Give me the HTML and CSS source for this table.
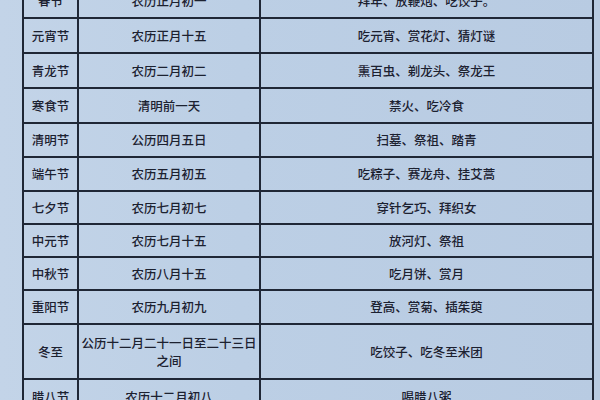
FILE: index.html
```html
<!DOCTYPE html>
<html lang="zh">
<head>
<meta charset="utf-8">
<link rel="stylesheet" href="styles.css">
</head>
<body>
<div class="sheet">
<table class="festivals">
<colgroup><col class="c1"><col class="c2"><col class="c3"></colgroup>
<tbody>
<tr class="r35"><td>春节</td><td>农历正月初一</td><td>拜年、放鞭炮、吃饺子。</td></tr>
<tr class="r35"><td>元宵节</td><td>农历正月十五</td><td>吃元宵、赏花灯、猜灯谜</td></tr>
<tr class="r35"><td>青龙节</td><td>农历二月初二</td><td>熏百虫、剃龙头、祭龙王</td></tr>
<tr class="r35"><td>寒食节</td><td>清明前一天</td><td>禁火、吃冷食</td></tr>
<tr class="r34"><td>清明节</td><td>公历四月五日</td><td>扫墓、祭祖、踏青</td></tr>
<tr class="r34"><td>端午节</td><td>农历五月初五</td><td>吃粽子、赛龙舟、挂艾蒿</td></tr>
<tr class="r33"><td>七夕节</td><td>农历七月初七</td><td>穿针乞巧、拜织女</td></tr>
<tr class="r33"><td>中元节</td><td>农历七月十五</td><td>放河灯、祭祖</td></tr>
<tr class="r33"><td>中秋节</td><td>农历八月十五</td><td>吃月饼、赏月</td></tr>
<tr class="r34"><td>重阳节</td><td>农历九月初九</td><td>登高、赏菊、插茱萸</td></tr>
<tr class="r55"><td>冬至</td><td class="nowrap">公历十二月二十一日至二十三日<br>之间</td><td>吃饺子、吃冬至米团</td></tr>
<tr class="r35"><td>腊八节</td><td>农历十二月初八</td><td>喝腊八粥</td></tr>
</tbody>
</table>
</div>
</body>
</html>
```

FILE: styles.css
```css
html, body {
  margin: 0;
  padding: 0;
}
body {
  width: 600px;
  height: 400px;
  overflow: hidden;
  background: linear-gradient(90deg, #c3d4e8 0%, #bccfe5 40%, #b8cbe2 100%);
  font-family: "Noto Sans CJK SC", "Noto Sans", sans-serif;
  color: #1c2130;
}
.sheet {
  padding-left: 22px;
  margin-top: -18px;
}
.festivals {
  border-collapse: collapse;
  table-layout: fixed;
  width: 570px;
}
.c1 { width: 55px; }
.c2 { width: 182px; }
.c3 { width: 333px; }
.festivals td {
  border: 2px solid #1f2736;
  text-align: center;
  vertical-align: middle;
  font-size: 12.5px;
  font-weight: 500;
  line-height: 18px;
  padding: 0 4px;
}
.festivals td:first-child {
  padding: 0 2px;
}
.festivals td.nowrap {
  white-space: nowrap;
  padding: 0;
}
.r35 td { height: 33px; }
.r34 td { height: 32px; }
.r33 td { height: 31px; }
.r55 td { height: 53px; }
```
